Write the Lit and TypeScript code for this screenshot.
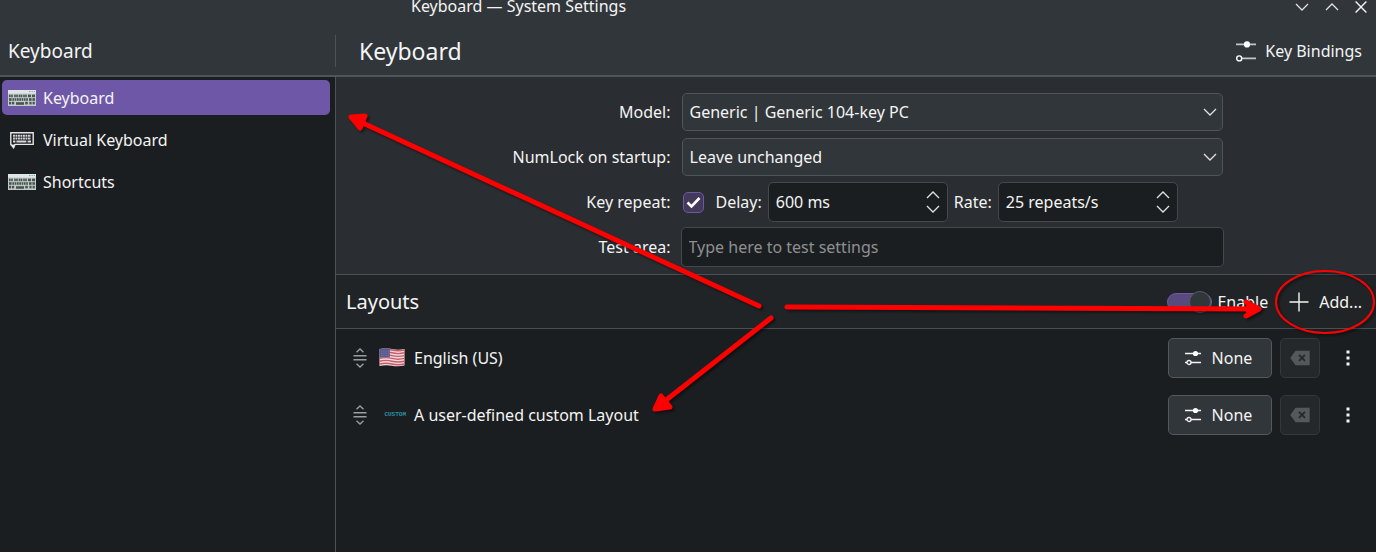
import { LitElement, html, css, svg } from "lit";
import { customElement, property } from "lit/decorators.js";
import { classMap } from "lit/directives/class-map.js";

const keyRow = (y: number, xs: number[], w: number) =>
  xs.map((x) => svg`<rect x=${x} y=${y} width=${w} height="2.6" fill="#475552"/>`);

const keyboardIcon = html`
  <svg width="28" height="16" viewBox="0 0 28 16" aria-hidden="true">
    <rect width="28" height="16" fill="#c3cbc9" />
    <rect width="28" height="3.6" fill="#dfe5e6" />
    <path d="M21 1.5h1.5M23.6 1.5h1.2M25.8 1.5h1.2" stroke="#5fb89c" stroke-width="1" />
    ${keyRow(4.6, [1, 3.2, 6.2, 8.2, 10.7, 12.7, 15.2, 17.2], 1.6)}
    ${keyRow(4.6, [20, 24], 3)}
    ${keyRow(8.2, [1], 2.6)}
    ${keyRow(8.2, [4.4, 6.7, 9, 11.3, 13.6, 15.9, 18.2], 1.7)}
    ${keyRow(8.2, [21, 24.4], 2.6)}
    ${keyRow(11.8, [1, 4, 21.4, 24.6], 2.2)}
    ${keyRow(12.2, [8], 8)}
    ${keyRow(11.8, [17.2], 2.6)}
  </svg>`;

const virtualIcon = html`
  <svg width="28" height="18" viewBox="0 0 28 18" aria-hidden="true">
    <path d="M2.8 1.8h22.4v11.6H7l-1.4 3.2-2.8-3.2z" fill="#1b1e20" stroke="#e6e6e6" stroke-width="1.4" />
    <path d="M2.800 13.4h4.200l-1.200 4.4z" fill="#e6e6e6" />
    <path d="M5 4.8h18M5 7.6h18" stroke="#d8d8d8" stroke-width="2" stroke-dasharray="1.9 .6" />
    <path d="M5 10.6h2.4M8.4 10.6h10M19.6 10.6h3.4" stroke="#d8d8d8" stroke-width="2" />
  </svg>`;

const slidersLarge = html`
  <svg width="22" height="22" viewBox="0 0 22 22" aria-hidden="true" fill="none">
    <path d="M1 4.4h20M6.4 18.4H21" stroke="#c3c6c8" stroke-width="1.6" />
    <circle cx="12" cy="4.4" r="3.1" fill="#fff" />
    <circle cx="4.2" cy="18.4" r="2.5" stroke="#fff" stroke-width="1.4" />
  </svg>`;

const slidersSmall = html`
  <svg width="16" height="16" viewBox="0 0 16 16" aria-hidden="true" fill="none" stroke="#f4f4f4" stroke-width="1.3">
    <path d="M0 3.500h16M6 12.500H16M0 12.500h2" />
    <circle cx="10.500" cy="3.500" r="2.600" fill="#fff" stroke="none" />
    <circle cx="4" cy="12.500" r="2" />
  </svg>`;

const chevron = (up: boolean) => html`
  <svg width="14" height="8" viewBox="0 0 14 8" aria-hidden="true">
    <path d=${up ? "M1 7l6-6 6 6" : "M1 1l6 6 6-6"} fill="none" stroke="#dfe1e2" stroke-width="1.3" />
  </svg>`;

const handle = html`
  <svg width="14" height="20" viewBox="0 0 14 20" aria-hidden="true" fill="none" stroke="#9b9ea0" stroke-width="1.4">
    <path d="M3.500 4.200L7 1 10.500 4.200M3.500 15.800L7 19 10.500 15.800M.5 7.800h13M.5 11.800h13" />
  </svg>`;

const usFlag = html`
  <svg width="26" height="19" viewBox="0 0 26 19" aria-hidden="true">
    <path d="M.5 1Q7 -.5 13 1T25.500 1V17.500Q19 19 13 17.800T.5 18z" fill="#e9dfe1" />
    ${[2, 4.8, 7.6, 10.4, 13.2, 16].map(
      (y) => svg`<path d=${`M.5 ${y}Q7 ${y - 1.6} 13 ${y}T25.500 ${y}`} fill="none" stroke="#d05866" stroke-width="1.400"/>`
    )}
    <path d="M.5 1Q6 -.3 10.800.5V9.300Q6 8.600 .5 9.800z" fill="#55588c" />
    <path d="M2 3h8M2 5.200h8M2 7.400h8" stroke="#9a9cc0" stroke-width=".7" stroke-dasharray=".8 1" />
  </svg>`;

const backspace = html`
  <svg width="20" height="16" viewBox="0 0 20 16" aria-hidden="true">
    <path d="M.3 8L5.500 .8H19.700V15.200H5.500z" fill="#54585b" />
    <path d="M9 4.800l6 6M15 4.800l-6 6" stroke="#25282b" stroke-width="1.800" />
  </svg>`;

@customElement("spin-field")
class SpinField extends LitElement {
  @property() label = "";
  @property() value = "";

  static styles = css`
    :host {
      display: flex;
      align-items: center;
      gap: 6px;
    }
    .box {
      box-sizing: border-box;
      display: flex;
      align-items: center;
      width: 180px;
      height: 40px;
      padding-right: 7px;
      border: 1px solid #45494d;
      border-radius: 5px;
      background: #1b1e20;
    }
    input {
      flex: 1;
      min-width: 0;
      padding: 0 0 0 7px;
      border: 0;
      outline: 0;
      background: none;
      color: #f4f4f4;
      font: inherit;
    }
    .steps {
      display: grid;
      gap: 6px;
    }
    button {
      display: flex;
      padding: 0;
      border: 0;
      background: none;
    }
  `;

  render() {
    return html`
      <label for="field">${this.label}</label>
      <span class="box">
        <input id="field" type="text" .value=${this.value} />
        <span class="steps">
          <button aria-label="Increase">${chevron(true)}</button>
          <button aria-label="Decrease">${chevron(false)}</button>
        </span>
      </span>`;
  }
}

@customElement("layout-row")
class LayoutRow extends LitElement {
  @property() name = "";
  @property() flag = "";

  static styles = css`
    :host {
      display: flex;
      align-items: center;
      gap: 8px;
      height: 57px;
      padding: 0 8px 0 17px;
    }
    svg {
      display: block;
    }
    .flag {
      display: flex;
      justify-content: flex-end;
      width: 28px;
      margin-left: 3px;
    }
    .us {
      justify-content: center;
    }
    .custom {
      color: #2b8fa6;
      font: bold 6px/8px "Liberation Mono", monospace;
    }
    .name {
      flex: 1;
    }
    button {
      display: flex;
      align-items: center;
      justify-content: center;
      box-sizing: border-box;
      width: 40px;
      height: 40px;
      padding: 0;
      border: 1px solid transparent;
      border-radius: 5px;
      background: none;
      color: #f4f4f4;
      font: inherit;
    }
    .shortcut {
      gap: 11px;
      width: 104px;
      padding-right: 3px;
      border-color: #53585b;
      background: #31363a;
    }
    .clear {
      border-color: #34383b;
      background: #25282b;
    }
  `;

  render() {
    return html`
      ${handle}
      <span class=${classMap({ flag: true, us: this.flag === "us" })}>
        ${this.flag === "us" ? usFlag : html`<span class="custom">CUSTOM</span>`}
      </span>
      <span class="name">${this.name}</span>
      <button class="shortcut">${slidersSmall}None</button>
      <button class="clear" aria-label="Clear shortcut" disabled>${backspace}</button>
      <button aria-label="More actions">
        <svg width="4" height="16" viewBox="0 0 4 16" fill="#f4f4f4" aria-hidden="true">
          <path d="M.5 .5h3v3h-3zM.5 6.500h3v3h-3zM.5 12.500h3v3h-3z" />
        </svg>
      </button>`;
  }
}

@customElement("app-root")
class AppRoot extends LitElement {
  static styles = css`
    :host {
      position: relative;
      display: flex;
      flex-direction: column;
      min-height: 100vh;
      overflow: hidden;
      background: #1b1e20;
      color: #f4f4f4;
      font: 16px/22px "Noto Sans", sans-serif;
    }
    svg {
      display: block;
    }
    h1,
    h2 {
      margin: 0;
      font-weight: 400;
    }
    button {
      padding: 0;
      border: 0;
      background: none;
      color: inherit;
      font: inherit;
    }
    .titlebar {
      display: flex;
      justify-content: space-between;
      height: 26px;
      padding: 0 9px 0 411px;
      background: #31363a;
      line-height: 12px;
    }
    .window-buttons {
      display: flex;
      align-items: center;
      gap: 16px;
      height: 13px;
    }
    .header {
      display: flex;
      align-items: center;
      height: 49px;
      border-bottom: 2px solid #4d565a;
      background: #31363a;
    }
    .side-title {
      box-sizing: border-box;
      width: 336px;
      padding-left: 8px;
      border-right: 1px solid #4d5256;
      font-size: 19px;
      line-height: 32px;
    }
    .page-title {
      flex: 1;
      padding-left: 23px;
      font-size: 23px;
      line-height: 32px;
    }
    .bindings {
      display: flex;
      align-items: center;
      gap: 8px;
      padding-right: 14px;
    }
    .body {
      flex: 1;
      display: flex;
    }
    nav {
      box-sizing: border-box;
      display: flex;
      flex-direction: column;
      gap: 7px;
      width: 336px;
      padding: 3px 5px 3px 2px;
      border-right: 1px solid #4d5256;
    }
    .item {
      display: flex;
      align-items: center;
      gap: 7px;
      height: 35px;
      padding-left: 6px;
      border-radius: 5px;
      color: inherit;
      text-decoration: none;
    }
    .item.active {
      background: #6f57a8;
    }
    main {
      flex: 1;
    }
    .form {
      display: grid;
      grid-template-columns: auto minmax(0, 543px);
      justify-content: center;
      align-items: center;
      column-gap: 10px;
      row-gap: 5px;
      padding: 15px 0 7px 24px;
      border-bottom: 1px solid #4b4f53;
      background: #2a2d31;
    }
    .label {
      text-align: right;
    }
    .row {
      display: flex;
      align-items: center;
      height: 40px;
    }
    .combo {
      display: grid;
      grid-template-columns: 1fr 14px;
      align-items: center;
      flex: 1;
      margin: 0 1px;
    }
    .combo select {
      grid-area: 1 / 1 / 2 / 3;
      height: 38px;
      padding: 0 7px;
      appearance: none;
      border: 1px solid #50555a;
      border-radius: 5px;
      background: #31363a;
      color: inherit;
      font: inherit;
    }
    .combo svg {
      grid-area: 1 / 2;
      justify-self: end;
      margin-right: 6px;
      pointer-events: none;
    }
    .repeat {
      gap: 6px;
      padding-left: 2px;
    }
    .check {
      display: grid;
      margin-right: 6px;
    }
    .check input {
      grid-area: 1 / 1;
      appearance: none;
      width: 21px;
      height: 21px;
      margin: 0;
      border: 1px solid #6f57a8;
      border-radius: 5px;
      background: #413a59;
    }
    .check svg {
      grid-area: 1 / 1;
      place-self: center;
      pointer-events: none;
    }
    .test {
      box-sizing: border-box;
      width: 100%;
      height: 40px;
      padding: 0 7px;
      border: 1px solid #45494d;
      border-radius: 5px;
      background: #1b1e20;
      color: inherit;
      font: inherit;
    }
    .test::placeholder {
      color: #8d9092;
      opacity: 1;
    }
    .layouts-bar {
      display: flex;
      align-items: center;
      height: 53px;
      padding: 0 14px 0 10px;
      border-bottom: 1px solid #4b4f53;
      background: #212427;
    }
    .layouts-bar h2 {
      flex: 1;
      font-size: 20px;
    }
    .enable {
      display: flex;
      align-items: center;
      gap: 5px;
      margin-right: 21px;
    }
    .switch {
      appearance: none;
      display: flex;
      align-items: center;
      justify-content: flex-end;
      width: 45px;
      height: 18px;
      margin: 0;
      border: 1px solid #6f57a8;
      border-radius: 9px;
      box-sizing: border-box;
      background: #584a7c;
    }
    .switch::after {
      content: "";
      flex: none;
      box-sizing: border-box;
      width: 22px;
      height: 22px;
      border: 1px solid #565b60;
      border-radius: 50%;
      background: #31363a;
    }
    .add {
      display: flex;
      align-items: center;
      gap: 10px;
    }
    .marks {
      position: absolute;
      top: 0;
      left: 0;
      pointer-events: none;
      filter: drop-shadow(2px 2px 1px rgb(0 0 0 / 45%));
    }
  `;

  private items = [
    { name: "Keyboard", icon: keyboardIcon },
    { name: "Virtual Keyboard", icon: virtualIcon },
    { name: "Shortcuts", icon: keyboardIcon },
  ];

  render() {
    return html`
      <div class="titlebar">
        <span>Keyboard — System Settings</span>
        <div class="window-buttons">
          <button aria-label="Minimize">${chevron(false)}</button>
          <button aria-label="Maximize">${chevron(true)}</button>
          <button aria-label="Close">
            <svg width="12" height="12" viewBox="0 0 12 12" aria-hidden="true">
              <path d="M.6 .6l10.800 10.800M11.400 .6L.6 11.400" stroke="#f4f4f4" stroke-width="1.400" />
            </svg>
          </button>
        </div>
      </div>
      <header class="header">
        <h2 class="side-title">Keyboard</h2>
        <h1 class="page-title">Keyboard</h1>
        <button class="bindings">${slidersLarge}Key Bindings</button>
      </header>
      <div class="body">
        <nav>
          ${this.items.map(
            (item, i) => html`<a href="#" class=${classMap({ item: true, active: i === 0 })}>${item.icon}${item.name}</a>`
          )}
        </nav>
        <main>
          <div class="form">
            <label class="label" for="model">Model:</label>
            <div class="row">
              <span class="combo">
                <select id="model"><option>Generic | Generic 104-key PC</option></select>
                ${chevron(false)}
              </span>
            </div>
            <label class="label" for="numlock">NumLock on startup:</label>
            <div class="row">
              <span class="combo">
                <select id="numlock"><option>Leave unchanged</option></select>
                ${chevron(false)}
              </span>
            </div>
            <label class="label" for="repeat">Key repeat:</label>
            <div class="row repeat">
              <span class="check">
                <input id="repeat" type="checkbox" checked />
                <svg width="15" height="13" viewBox="0 0 15 13" aria-hidden="true">
                  <path d="M1.500 6.500l4 4 8-8.500" fill="none" stroke="#fff" stroke-width="2.600" />
                </svg>
              </span>
              <spin-field label="Delay:" value="600 ms"></spin-field>
              <spin-field label="Rate:" value="25 repeats/s"></spin-field>
            </div>
            <label class="label" for="test">Test area:</label>
            <input class="test" id="test" type="text" placeholder="Type here to test settings" />
          </div>
          <div class="layouts-bar">
            <h2>Layouts</h2>
            <label class="enable"><input class="switch" type="checkbox" role="switch" checked />Enable</label>
            <button class="add">
              <svg width="20" height="20" viewBox="0 0 20 20" aria-hidden="true">
                <path d="M10 .5v19M.5 10h19" stroke="#f4f4f4" stroke-width="1.400" />
              </svg>
              Add...
            </button>
          </div>
          <layout-row name="English (US)" flag="us"></layout-row>
          <layout-row name="A user-defined custom Layout" flag="custom"></layout-row>
        </main>
      </div>
      <svg class="marks" width="1376" height="552" viewBox="0 0 1376 552" fill="none" stroke="#f00" stroke-linecap="round" stroke-linejoin="round" aria-hidden="true">
        <path d="M759 306L352 118" stroke-width="5" />
        <path d="M365 116L351 117l9 11z" fill="#f00" stroke-width="5" />
        <path d="M787 307L1258 309" stroke-width="5" />
        <path d="M1246 302L1259 309l-13 7" fill="#f00" stroke-width="5" />
        <path d="M771 318L656 408" stroke-width="5" />
        <path d="M661 396L655 409l15-2z" fill="#f00" stroke-width="5" />
        <ellipse cx="1325" cy="302" rx="49" ry="31" stroke-width="2" />
      </svg>`;
  }
}
